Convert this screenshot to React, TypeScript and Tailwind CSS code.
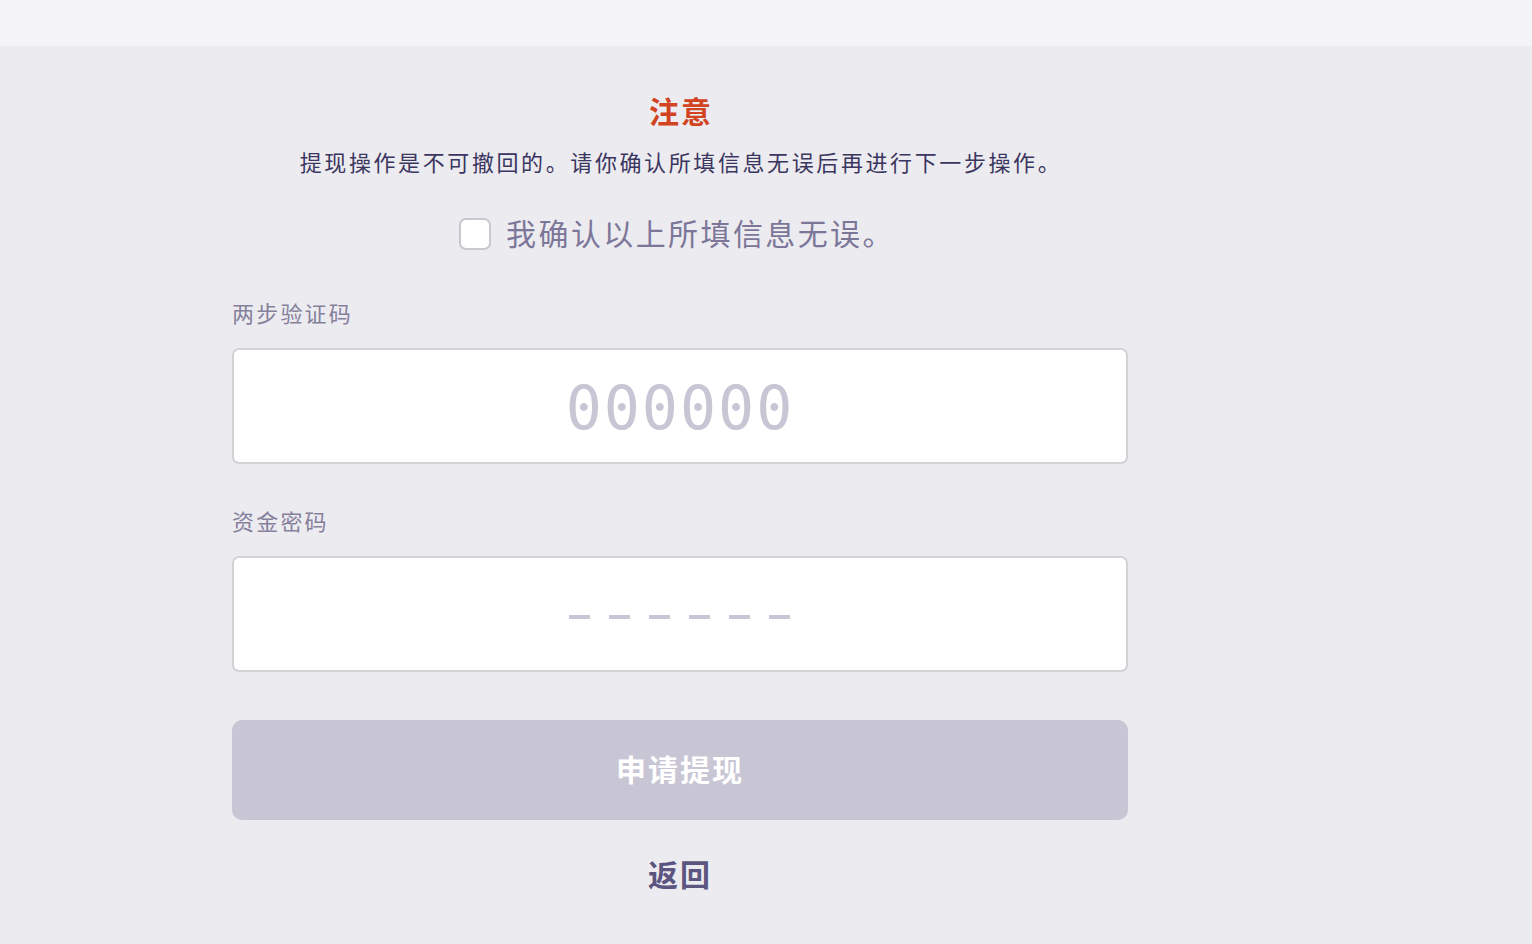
import { useState } from 'react'

const cjk = '"Noto Sans CJK SC", "Noto Sans", sans-serif'

function Field({ label, children }: { label: string; children: React.ReactNode }) {
  return (
    <div className="flex flex-col">
      <div className="text-[22px] leading-[30px] tracking-[2.2px] text-[#85809c]">{label}</div>
      <div className="mt-[21px] h-[116px] rounded-[7px] border-2 border-[#d3d2d7] bg-white flex items-center justify-center">
        {children}
      </div>
    </div>
  )
}

export default function App() {
  const [checked, setChecked] = useState(false)
  const [code, setCode] = useState('')

  return (
    <div className="min-h-[944px] bg-[#ecebf0]" style={{ fontFamily: cjk }}>
      {/* top bar */}
      <div className="h-[46px] bg-[#f4f4f7]" />

      <div className="ml-[232px] w-[896px] flex flex-col">
        <div className="mt-[44px] text-center text-[30px] leading-[40px] font-bold tracking-[2px] text-[#d2431f] pl-[2px]">
          注意
        </div>
        <div className="mt-[16px] text-center text-[22px] leading-[30px] tracking-[2.6px] text-[#3b3660] pl-[2px]">
          提现操作是不可撤回的。请你确认所填信息无误后再进行下一步操作。
        </div>

        <label className="mt-[42px] flex items-center justify-center gap-[15px] pr-[6px] cursor-pointer">
          <span
            onClick={() => setChecked(!checked)}
            className="w-[32px] h-[32px] rounded-[7px] border-2 border-[#c9c8cc] bg-white"
          />
          <span className="-mt-[4px] text-[30px] leading-[32px] tracking-[2.4px] text-[#7c7799]">
            我确认以上所填信息无误。
          </span>
        </label>

        <div className="mt-[47px]">
          <Field label="两步验证码">
            <input
              value={code}
              onChange={(e) => setCode(e.target.value)}
              placeholder="000000"
              className="w-full h-full pt-[4px] bg-transparent outline-none text-center text-[60px] tracking-[2px] text-[#3b3660] placeholder:text-[#c8c6d4]"
              style={{ fontFamily: '"DejaVu Sans Mono", monospace' }}
            />
          </Field>
        </div>

        <div className="mt-[41px]">
          <Field label="资金密码">
            <div className="flex gap-[19px] pt-[6px] mr-[2px]">
              {[0, 1, 2, 3, 4, 5].map((i) => (
                <span key={i} className="block w-[21px] h-[4px] bg-[#c8c6d4]" />
              ))}
            </div>
          </Field>
        </div>

        <button className="mt-[48px] h-[100px] pb-[4px] rounded-[10px] bg-[#c8c6d4] text-white text-[30px] font-bold tracking-[2px]">
          申请提现
        </button>

        <div className="mt-[33px] text-center text-[30px] leading-[40px] font-bold tracking-[2px] text-[#5b5580]">
          返回
        </div>
      </div>
    </div>
  )
}
